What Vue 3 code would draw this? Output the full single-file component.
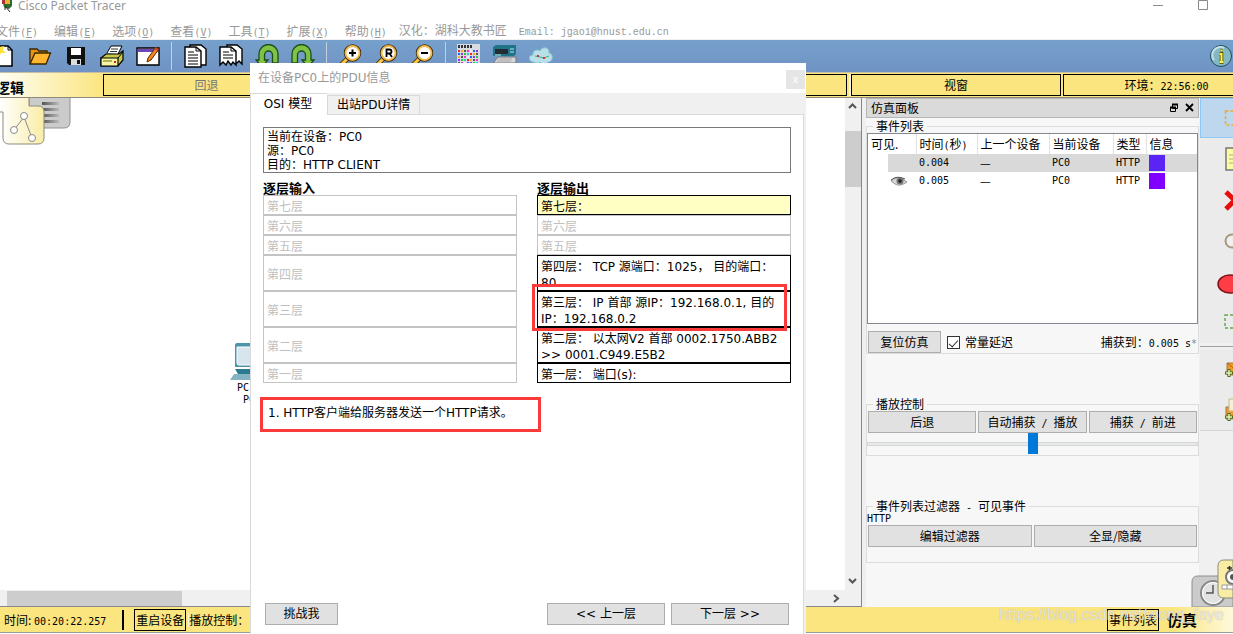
<script setup>
import { ref } from 'vue'

const menus = [
  ['文件', 'F'], ['编辑', 'E'], ['选项', 'O'], ['查看', 'V'],
  ['工具', 'T'], ['扩展', 'X'], ['帮助', 'H'],
]

const swatches = []
const hues = ['#f22', '#2c4', '#26e', '#e3c', '#fa2', '#2cc', '#93e', '#eee', '#555']
for (let r = 0; r < 5; r++) {
  for (let c = 0; c < 7; c++) swatches.push({ x: 1 + c * 3, y: 6 + r * 3, fill: hues[(r * 2 + c * 4) % 9] })
}

const events = [
  { time: '0.004', color: 'blue', seen: false },
  { time: '0.005', color: 'violet', seen: true },
]

const inLayers = ['第七层', '第六层', '第五层', '第四层', '第三层', '第二层', '第一层']
const tall = (i) => i > 2 && i < 6
const outLayers = [
  { lines: ['第七层：'], kind: 'current' },
  { lines: ['第六层'], kind: 'off' },
  { lines: ['第五层'], kind: 'off' },
  { lines: ['第四层： TCP 源端口：1025， 目的端口：', '80'], kind: 'on' },
  { lines: ['第三层： IP 首部 源IP：192.168.0.1, 目的', 'IP：192.168.0.2'], kind: 'on' },
  { lines: ['第二层： 以太网V2 首部 0002.1750.ABB2', '>> 0001.C949.E5B2'], kind: 'on' },
  { lines: ['第一层： 端口(s):'], kind: 'on' },
]

const speed = ref(50)
const constantDelay = ref(true)
</script>

<template>
  <div class="app">
    <header class="titlebar">
      <svg class="logo" width="14" height="12" viewBox="0 0 14 12">
        <path d="M0 0h10v6l-3 3-5-2z" fill="#2c6b2e" /><path d="M3 0h5v4H3z" fill="#e8b23a" />
        <path d="M0 0h3v4H0z" fill="#a33" /><path d="M3 6l5 6M3 7v3" stroke="#222" fill="none" />
      </svg>
      <span class="app-name">Cisco Packet Tracer</span>
      <svg class="win-ctl" width="56" height="12" viewBox="0 0 56 12">
        <path d="M0 5.500h10M45.500.500h9v9h-9z" fill="none" stroke="#8a8a8a" />
      </svg>
    </header>

    <nav class="menubar">
      <button v-for="m in menus" :key="m[1]" type="button">{{ m[0] }}<span class="m">(<u>{{ m[1] }}</u>)</span></button>
      <span class="credit">汉化：湖科大教书匠<span class="m email">Email: jgao1@hnust.edu.cn</span></span>
    </nav>

    <div class="toolbar">
      <button type="button" aria-label="新建">
        <svg width="24" height="24" viewBox="0 0 24 24"><path d="M3 2h13l4 4v16H3z" fill="#fff" stroke="#000" stroke-width="1.500" /><path d="M16 2v4h4" fill="none" stroke="#000" /><path d="M5 0l3 3 4-1-1 4 3 3-5 0-2 4-2-4z" fill="#ffe23c" /></svg>
      </button>
      <button type="button" aria-label="打开">
        <svg width="24" height="24" viewBox="0 0 24 24"><path d="M2 20V5h7l2 2h8v4" fill="#e59416" stroke="#3a2600" stroke-width="1.300" /><path d="M2 20L7 9h15.500L18 20z" fill="#ffb52e" stroke="#3a2600" stroke-width="1.300" /></svg>
      </button>
      <button type="button" aria-label="保存">
        <svg width="24" height="24" viewBox="0 0 24 24"><path d="M3 3h18v18H5l-2-2z" fill="#111" /><path d="M7 4h10v7H7z" fill="#fff" /><path d="M7 15h10v6H7z" fill="#ddd" /><path d="M13 16h3v4h-3z" fill="#111" /></svg>
      </button>
      <button type="button" aria-label="打印">
        <svg width="24" height="24" viewBox="0 0 24 24"><path d="M7 9L11 2h11l-4 8" fill="#fff" stroke="#000" /><path d="M11 5h7M10 7.500h7" stroke="#333" /><path d="M1 14l5-4h13l4-3v9l-5 6H1z" fill="#c6c94b" stroke="#000" stroke-width="1.200" /><path d="M1 14h17v8H1z" fill="#f5f6a2" stroke="#000" stroke-width="1.200" /><path d="M18 14l5-6" stroke="#000" /><path d="M3 17h9" stroke="#9a9a40" stroke-width="1.500" /><path d="M14 18h2" stroke="#c22" stroke-width="2" /></svg>
      </button>
      <button type="button" aria-label="活动向导">
        <svg width="24" height="24" viewBox="0 0 24 24"><path d="M1 4h22v17H1z" fill="#fff" stroke="#000" stroke-width="1.400" /><path d="M2 5h20v3H2z" fill="#6d45b5" /><path d="M12 14L20 3l3 2-8 11-4 2z" fill="#f28422" stroke="#5b2a00" /><path d="M19 4l3 2" stroke="#c33" stroke-width="2" /></svg>
      </button>
      <i class="sep"></i>
      <button type="button" aria-label="复制">
        <svg width="24" height="24" viewBox="0 0 24 24"><path d="M7 1h11l5 4v16H7z" fill="#fff" stroke="#000" stroke-width="1.400" /><path d="M2 3h11l5 4v16H2z" fill="#fff" stroke="#000" stroke-width="1.400" /><path d="M13 3v4h5M5 8h6M5 11h10M5 14h10M5 17h10M5 20h10" fill="none" stroke="#000" /></svg>
      </button>
      <button type="button" aria-label="粘贴">
        <svg width="24" height="24" viewBox="0 0 24 24"><path d="M8 1h10l5 4v15l-3-3-2 2-10-4z" fill="#fff" stroke="#000" stroke-width="1.400" /><path d="M1 3h11l5 4v14l-3-3-2 3-3-4-2 4-3-3-3 3z" fill="#fff" stroke="#000" stroke-width="1.400" /><path d="M12 3v4h5M4 8h6M4 11h10M4 14h10" fill="none" stroke="#000" /></svg>
      </button>
      <button type="button" aria-label="撤销">
        <svg width="24" height="24" viewBox="0 0 24 24"><path d="M23 19V10A9.500 9.500 0 0 0 4 10v6H1l6 7 6-7H9.500v-5a4 4 0 0 1 8 0v8z" fill="#7fc244" stroke="#1d4d1a" stroke-width="1.300" /></svg>
      </button>
      <button type="button" aria-label="重做">
        <svg width="24" height="24" viewBox="0 0 24 24"><path d="M1 19V10A9.500 9.500 0 0 1 20 10v6h3l-6 7-6-7h3.500v-5a4 4 0 0 0-8 0v8z" fill="#7fc244" stroke="#1d4d1a" stroke-width="1.300" /></svg>
      </button>
      <i class="sep"></i>
      <button v-for="z in ['plus', 'reset', 'minus']" :key="z" type="button" :aria-label="z">
        <svg width="24" height="24" viewBox="0 0 24 24">
          <path d="M10 14L2 22" stroke="#5a3c05" stroke-width="5" /><path d="M10 14L2 22" stroke="#ffc64a" stroke-width="3" />
          <circle cx="14.500" cy="9" r="7" fill="#fff" stroke="#3d2b08" stroke-width="3.400" /><circle cx="14.500" cy="9" r="7" fill="#fff" stroke="#f3b94a" stroke-width="1.800" />
          <path v-if="z === 'plus'" d="M11 9h7M14.500 5.500v7" stroke="#000" stroke-width="2" />
          <path v-else-if="z === 'minus'" d="M11 9h7" stroke="#000" stroke-width="2" />
          <path v-else d="M12.500 13V5.500h3a1.800 1.800 0 0 1 0 4h-3m3 0l2.500 3.500" fill="none" stroke="#000" stroke-width="1.800" />
        </svg>
      </button>
      <i class="sep"></i>
      <button type="button" aria-label="调色板">
        <svg width="24" height="24" viewBox="0 0 24 24"><path d="M0 0h23v24H0z" fill="#d8dce0" /><path d="M1 2.500h15" stroke="#333" stroke-width="3" stroke-dasharray="2 1" /><rect v-for="(s, i) in swatches" :key="i" :x="s.x" :y="s.y" width="2" height="2" :fill="s.fill" /></svg>
      </button>
      <button type="button" aria-label="自定义设备">
        <svg width="24" height="24" viewBox="0 0 24 24"><path d="M0 3l3-2h20v9l-2 2H0z" fill="#1f7488" /><path d="M2 5h13v5H2z" fill="#222c33" /><path d="M17 5h4M17 8h4M2 11h6" stroke="#bfe4ec" /><path d="M1 18l4-5h18v6H1z" fill="#d5d5d5" stroke="#777" /><path d="M5 15h14M4 17h14" stroke="#aaa" /></svg>
      </button>
      <button type="button" aria-label="云">
        <svg width="24" height="24" viewBox="0 0 24 24"><path d="M5 18C-1 18-1 11 4 11c-1-5 5-6 7-4 2-5 10-4 9 2 5 1 4 9-1 9-3 3-7 2-8 0-2 2-5 1-6 0z" fill="#b8e0e8" stroke="#8ac2cf" /><path d="M6 12l5 1 4 1 5-2" fill="none" stroke="#4a8" /><path d="M8 12h2M14 14h2" stroke="#c33" stroke-width="2" /></svg>
      </button>
      <button type="button" class="info" aria-label="信息">
        <svg width="24" height="24" viewBox="0 0 24 24"><circle cx="12" cy="12" r="10.500" fill="#82b9c4" stroke="#1f4d5c" /><path d="M5 16a8 8 0 0 1 10-12" fill="none" stroke="#c5e2e6" stroke-width="2" /><path d="M10.500 10h2v8M10.500 18h4M11.500 6.500h2" fill="none" stroke="#4a4a00" stroke-width="3.500" /><path d="M10.500 10h2v8M10.500 18h4M11.500 6.500h2" fill="none" stroke="#fff04a" stroke-width="2" /></svg>
      </button>
    </div>

    <div class="navbar">
      <strong class="logic">逻辑</strong>
      <button type="button" class="back">回退</button>
      <button type="button" class="fill" aria-label="移动对象"></button>
      <button type="button" class="viewport">视窗</button>
      <button type="button" class="env">环境：<span class="m">22:56:00</span></button>
    </div>

    <main class="body">
      <section class="workspace">
        <div class="canvas">
          <svg class="mode-tabs" width="74" height="50" viewBox="0 0 74 50">
            <defs>
              <linearGradient id="cream" x1="0" x2="1"><stop offset="0" stop-color="#fff" /><stop offset="1" stop-color="#f9eda6" /></linearGradient>
              <linearGradient id="slate" x1="0" x2="1"><stop offset="0" stop-color="#555" /><stop offset="1" stop-color="#bbb" /></linearGradient>
            </defs>
            <path d="M29 0h41v25q0 6-6 6H29z" fill="#cbcbcb" stroke="#909090" />
            <path d="M42 5h17v3H42zM42 11h17v3H42zM42 17h17v3H42zM42 23h17v3H42z" fill="url(#slate)" />
            <path d="M0 0h29v9h9q6 0 6 6v26q0 6-6 6H9q-6 0-6-6V15H0z" fill="url(#cream)" />
            <path d="M29 0v9h9q6 0 6 6v26q0 6-6 6H9q-6 0-6-6V15H0" fill="none" stroke="#8d8b7c" />
            <path d="M24 20L14 33M24 20l8 21" stroke="#888" />
            <g fill="#fff" stroke="#888"><circle cx="24" cy="19" r="3.500" /><circle cx="14" cy="33" r="3.500" /><circle cx="32" cy="41" r="3.500" /></g>
          </svg>
          <div class="pc-node">
            <svg width="40" height="38" viewBox="0 0 40 38"><path d="M5 2q0-2 2-2h26v24H5z" fill="#4c95ab" /><path d="M7 4h24v18H9q-2 0-2-2z" fill="#d6e6ec" stroke="#fff" /><path d="M5 26h30v5H8z" fill="#2b7a92" /><path d="M4 31h32l4 6H0z" fill="#84b3c4" /></svg>
            <span class="m">PC-PT</span><span class="m">PC0</span>
          </div>
        </div>
        <div class="vbar">
          <svg width="15" height="16" viewBox="0 0 15 16"><path d="M4 10l3.500-3.500L11 10" fill="none" stroke="#555" stroke-width="2" /></svg>
          <i></i>
          <svg class="end" width="15" height="16" viewBox="0 0 15 16"><path d="M4 5l3.500 3.500L11 5" fill="none" stroke="#555" stroke-width="2" /></svg>
        </div>
        <div class="hbar">
          <i></i>
          <svg width="16" height="15" viewBox="0 0 16 15"><path d="M5 4l4 3.500L5 11" fill="none" stroke="#555" stroke-width="2" /></svg>
        </div>
      </section>

      <aside class="panel">
        <div class="panel-head">
          <span>仿真面板</span>
          <svg width="26" height="10" viewBox="0 0 26 10"><path d="M3.500 1.500h5v4h-5zM1.500 4.500h5v4h-5z" fill="#dadada" stroke="#000" /><path d="M3 1.500h6M1 4.500h6" stroke="#000" stroke-width="2" /><path d="M17 1l7 7M24 1l-7 7" stroke="#000" stroke-width="1.800" /></svg>
        </div>

        <fieldset>
          <legend>事件列表</legend>
          <div class="events">
            <table>
              <colgroup><col class="c1"><col class="c2"><col class="c3"><col class="c4"><col class="c5"><col></colgroup>
              <thead><tr><th>可见.</th><th>时间<span class="m">(</span>秒<span class="m">)</span></th><th>上一个设备</th><th>当前设备</th><th>类型</th><th>信息</th></tr></thead>
              <tbody>
                <tr v-for="e in events" :key="e.time" :class="{ picked: !e.seen }">
                  <td class="eye"><svg v-if="e.seen" width="18" height="12" viewBox="0 0 18 12"><path d="M1 6Q7-1 17 7q-7 5-12 2z" fill="#d5d5d5" stroke="#999" /><circle cx="10" cy="6" r="3.500" fill="#777" /><circle cx="10" cy="6" r="1.800" fill="#222" /><path d="M1 5Q7 0 15 4" fill="none" stroke="#555" /></svg></td>
                  <td class="m">{{ e.time }}</td><td>—</td><td class="m">PC0</td><td class="m">HTTP</td>
                  <td class="chip"><i :class="e.color"></i></td>
                </tr>
              </tbody>
            </table>
          </div>
          <div class="reset-row">
            <button type="button" class="btn reset">复位仿真</button>
            <label><input v-model="constantDelay" type="checkbox">常量延迟</label>
            <span class="captured">捕获到：<span class="m">0.005 s<em>*</em></span></span>
          </div>
        </fieldset>

        <fieldset>
          <legend>播放控制</legend>
          <div class="btn-row">
            <button type="button" class="btn">后退</button>
            <button type="button" class="btn">自动捕获<span class="m"> / </span>播放</button>
            <button type="button" class="btn">捕获<span class="m"> / </span>前进</button>
          </div>
          <input v-model="speed" class="slider" type="range" min="0" max="100" aria-label="播放速度">
        </fieldset>

        <fieldset class="filters">
          <legend>事件列表过滤器<span class="m"> - </span>可见事件</legend>
          <div class="m proto">HTTP</div>
          <div class="btn-row">
            <button type="button" class="btn">编辑过滤器</button>
            <button type="button" class="btn">全显/隐藏</button>
          </div>
        </fieldset>
      </aside>

      <div class="tools">
        <button type="button" class="active" aria-label="选择"><svg width="24" height="24" viewBox="0 0 24 24"><path d="M1.500 5h20v14h-20z" fill="none" stroke="#f5a623" stroke-width="1.500" stroke-dasharray="3 2" /></svg></button>
        <button type="button" aria-label="注释"><svg width="24" height="24" viewBox="0 0 24 24"><path d="M2 1h20v22H2z" fill="#fbfba0" stroke="#777" stroke-width="1.500" /><path d="M5 8h14M5 12h14M5 16h14" stroke="#aaa" /></svg></button>
        <button type="button" aria-label="删除"><svg width="24" height="24" viewBox="0 0 24 24"><path d="M2 4l18 17M20 3L2 21" stroke="#e80d0d" stroke-width="5" /></svg></button>
        <button type="button" aria-label="查看"><svg width="24" height="24" viewBox="0 0 24 24"><circle cx="8" cy="12" r="6.500" fill="#f0f0f0" stroke="#a89880" stroke-width="2" /></svg></button>
        <button type="button" class="wide" aria-label="绘图"><svg width="32" height="24" viewBox="0 0 32 24"><ellipse cx="13" cy="14" rx="12" ry="9" fill="#ff3d46" stroke="#801018" stroke-width="1.500" /></svg></button>
        <button type="button" aria-label="调整大小"><svg width="24" height="24" viewBox="0 0 24 24"><path d="M1 4h20v13H1z" fill="none" stroke="#6aa84f" stroke-width="1.500" stroke-dasharray="3 2" /></svg></button>
        <hr>
        <button type="button" aria-label="简单PDU"><svg width="24" height="24" viewBox="0 0 24 24"><path d="M3 5h19v12H3z" fill="#f09a2a" stroke="#a0784a" /><path d="M3 5l9 7 9-7" fill="none" stroke="#b3651a" /><path d="M1 15h8M5 11v8" stroke="#446b22" stroke-width="3" /><path d="M2 15h6M5 12v6" stroke="#e5f5b0" stroke-width="1.500" /></svg></button>
        <button type="button" aria-label="复杂PDU"><svg width="24" height="24" viewBox="0 0 24 24"><path d="M2 9h20v12H2z" fill="#f09a2a" stroke="#a0784a" /><path d="M5 1h17v12H5z" fill="#f5f0d8" stroke="#c6b98c" /><path d="M9 5h9" stroke="#999" /><path d="M1 19h8M5 15v8" stroke="#446b22" stroke-width="3" /><path d="M2 19h6M5 16v6" stroke="#e5f5b0" stroke-width="1.500" /></svg></button>
      </div>

      <svg class="time-tabs" width="42" height="48" viewBox="0 0 42 48">
        <path d="M1 48V23q0-6 6-6h35v31z" fill="#cbcbcb" stroke="#8e8e8e" />
        <circle cx="22" cy="34" r="12" fill="#e2e2e2" stroke="#888" stroke-width="2" /><circle cx="22" cy="34" r="10.500" fill="none" stroke="#fff" /><path d="M22 26v8h-7" fill="none" stroke="#555" stroke-width="1.500" />
        <path d="M42 1h-9q-6 0-6 6v26q0 6 6 6h9z" fill="#f9eda6" stroke="#8d8b7c" />
        <circle cx="42" cy="18" r="7" fill="#fff" stroke="#777" stroke-width="2" /><circle cx="42" cy="18" r="3" fill="#555" /><path d="M36 9h5M38.500 7v4" stroke="#333" stroke-width="1.500" /><path d="M31 26h11v4H31zM36 26v4" fill="#fff" stroke="#999" />
      </svg>
    </main>

    <footer class="status">
      <span>时间: <span class="m">00:20:22.257</span></span>
      <i class="bar"></i>
      <button type="button" class="box">重启设备</button>
      <span class="play">播放控制：</span>
      <button type="button" class="box list">事件列表</button>
      <strong>仿真</strong>
      <span class="watermark">https://blog.csdn.net/wong_faye</span>
    </footer>

    <section class="dialog" role="dialog" aria-label="PDU信息">
      <div class="dlg-title">
        <span>在设备PC0上的PDU信息</span>
        <button type="button">x</button>
      </div>
      <div class="tabs">
        <button type="button" class="tab on">OSI 模型</button>
        <button type="button" class="tab">出站PDU详情</button>
      </div>
      <div class="page">
        <div class="summary">当前在设备：PC0<br>源：PC0<br>目的：HTTP CLIENT</div>
        <div class="cols">
          <div class="col">
            <h2>逐层输入</h2>
            <div v-for="(t, i) in inLayers" :key="t" class="layer off" :class="{ tall: tall(i) }">{{ t }}</div>
          </div>
          <div class="col">
            <h2>逐层输出</h2>
            <div v-for="(l, i) in outLayers" :key="i" class="layer" :class="[l.kind, { tall: tall(i) }]">
              <div v-for="s in l.lines" :key="s">{{ s }}</div>
            </div>
            <div class="mark"></div>
          </div>
        </div>
        <p class="desc">1. HTTP客户端给服务器发送一个HTTP请求。</p>
        <div class="actions">
          <button type="button" class="btn">挑战我</button>
          <span></span>
          <button type="button" class="btn step">&lt;&lt; 上一层</button>
          <button type="button" class="btn step">下一层 &gt;&gt;</button>
        </div>
      </div>
    </section>
  </div>
</template>

<style>
html, body { margin: 0; background: #fff; }
</style>

<style scoped>
* { box-sizing: border-box; }
.app {
  position: relative; display: flex; flex-direction: column; min-height: 100vh; overflow: hidden;
  background: #fff; color: #000; font: 12px/14px "Noto Sans CJK SC", sans-serif;
}
button { font: inherit; color: inherit; padding: 0; margin: 0; border: 0; background: none; white-space: nowrap; }
svg { display: block; flex: none; }
.m { font-family: "DejaVu Sans Mono", "Noto Sans CJK SC", monospace; font-size: 10px; white-space: pre; }
span.m { line-height: 10px; }

.titlebar { display: flex; height: 22px; padding: 0 24px 0 2px; color: #999; }
.app-name { margin-left: 2px; font: 12px/12px "Noto Sans", sans-serif; }
.win-ctl { margin-left: auto; }
.menubar { display: flex; gap: 16px; height: 18px; margin-left: -4px; line-height: 16px; color: #999; border-bottom: 1px solid #f0f0f0; white-space: nowrap; }
.credit { margin-left: -4px; }
.email { margin-left: 12px; font-family: "Liberation Mono", monospace; }

.toolbar { display: flex; align-items: center; height: 32px; background: linear-gradient(#76a0cc, #7093c3); }
.toolbar button { flex: none; width: 36px; display: flex; justify-content: center; }
.toolbar button:first-child { margin-left: -14px; }
.sep { flex: none; width: 1px; height: 28px; margin: 0 5px; background: #c5d0de; }
.toolbar .info { margin-left: auto; width: 24px; }

.navbar { display: flex; height: 26px; padding: 1px 0; background: #fae57f; border-top: 1px solid #c4bfa5; border-bottom: 1px solid #8c8a80; }
.navbar button { border: 1px solid #000; height: 22px; line-height: 20px; }
.logic { flex: none; width: 103px; margin: -1px 0; padding: 5px 0 0; text-indent: -4px; font-size: 14px; line-height: 18px; background: linear-gradient(90deg, #fffef3, #fae57f); }
.back { flex: none; width: 207px; }
.navbar .back { color: #777; }
.fill { flex: 1; margin-right: 2px; }
.viewport { flex: none; width: 210px; box-shadow: -2px 0 #f2f2f2; }
.navbar .viewport { margin: 0 2px; }
.env { flex: none; width: 170px; }
.navbar .env { padding-left: 36px; border-right: 0; }

.body { position: relative; flex: 1; display: flex; background: #f0f0f0; }
.workspace { flex: 1; min-width: 0; display: grid; grid-template: 1fr 16px / 1fr 16px; border-right: 1px solid #828790; border-bottom: 1px solid #828790; background: #f0f0f0; }
.canvas { position: relative; background: #fff; overflow: hidden; }
.mode-tabs { position: absolute; left: 0; top: -1px; }
.pc-node { position: absolute; left: 230px; top: 245px; width: 44px; display: flex; flex-direction: column; align-items: center; }
.pc-node .m { line-height: 12px; }
.pc-node svg { align-self: flex-start; margin-bottom: 1px; }
.vbar { display: flex; flex-direction: column; }
.vbar i { height: 56px; margin: 17px 0 0; background: #cdcdcd; }
.vbar .end { margin-top: auto; }
.hbar { display: flex; align-items: center; justify-content: space-between; padding-left: 7px; }
.hbar i { width: 175px; height: 15px; background: #cdcdcd; }

.panel { flex: none; width: 333px; margin-left: 4px; background: #f7f7f7; }
.panel-head { display: flex; align-items: center; justify-content: space-between; height: 20px; padding: 0 3px 0 4px; border: 1px solid #b5b5b5; background: #dadada; }
fieldset { min-width: 0; margin: 1px 0 43px; padding: 0; border: 1px solid #dcdcdc; }
legend { margin-left: 6px; padding: 0 3px; line-height: 14px; }
.events { height: 191px; border: 1px solid #828790; background: #fff; }
table { width: 100%; border-collapse: collapse; table-layout: fixed; }
th, td { padding: 0 0 0 3px; text-align: left; font-weight: normal; white-space: nowrap; }
th { height: 20px; border-right: 1px solid #e2e2e2; line-height: 18px; }
th:last-child { border: 0; }
td { height: 18px; line-height: 16px; }
.c1 { width: 48px; } .c2 { width: 61px; } .c3 { width: 72px; } .c4 { width: 64px; } .c5 { width: 33px; }
.picked { background: linear-gradient(90deg, #fff 20px, #d9d9d9 20px); }
.eye { padding-left: 22px; }
.chip i { display: block; width: 16px; height: 16px; }
.blue { background: #5924f4; }
.violet { background: #8000ff; }
.btn { height: 22px; border: 1px solid #adadad; background: #e1e1e1; line-height: 20px; }
.reset-row { display: flex; align-items: center; margin-top: 7px; padding: 0 1px; }
.reset { width: 73px; margin-right: 6px; }
label { display: flex; align-items: center; gap: 5px; }
input[type="checkbox"] { appearance: none; width: 13px; height: 13px; margin: 0; border: 1px solid #333; background: #fff; display: grid; place-items: center; }
input[type="checkbox"]:checked::after { content: ""; width: 4px; height: 8px; border: solid #333; border-width: 0 1px 1px 0; transform: rotate(42deg); }
.captured { margin-left: auto; white-space: pre; }
em { font-style: normal; color: #888; }
.btn-row { display: flex; gap: 2px; padding: 0 1px; }
.btn-row .btn { flex: 1 1 0; }
.slider { appearance: none; display: block; width: 100%; height: 22px; margin: 0; background: none; }
.slider::-webkit-slider-runnable-track { height: 4px; border: 1px solid #d6d6d6; background: #e7eaea; }
.slider::-webkit-slider-thumb { appearance: none; width: 10px; height: 21px; margin-top: -10px; background: #0078d7; }
.proto { line-height: 12px; }
.panel .filters { margin-bottom: 0; padding-bottom: 15px; }

.tools { flex: none; width: 34px; padding-left: 1px; overflow: hidden; background: #f0f0f0; }
.tools button { display: flex; align-items: center; width: 64px; height: 41px; padding-left: 24px; background: #ebebeb; }
.tools button.active { height: 40px; padding-left: 23px; background: #bcd7ee; border: 1px solid #8fc8f7; }
.tools button.wide { padding-left: 17px; }
.tools hr { margin: 3px 0 2px; border: 0; border-top: 1px solid #a0a0a0; }
.tools button:last-child { border-bottom: 1px solid #d5d5d5; }
.time-tabs { position: absolute; right: 0; bottom: 0; }

.status { position: relative; display: flex; align-items: center; height: 26px; margin-bottom: 1px; padding: 0 36px 0 4px; background: linear-gradient(90deg, #fae57f calc(100% - 60px), #fff9dc); border-bottom: 1px solid #9b9b9b; white-space: nowrap; }
.bar { width: 2px; height: 20px; margin: 0 10px 0 16px; background: #000; }
.box { width: 52px; height: 22px; border: 1px solid #000; line-height: 20px; }
.play { margin-left: 2px; border-left: 1px solid #fff8d8; }
.list { margin-left: auto; }
.status strong { margin-left: 8px; font-size: 15px; line-height: 24px; }
.watermark { position: absolute; right: 9px; top: -2px; font: 16px/20px "Liberation Sans", sans-serif; color: rgba(255, 255, 255, .7); text-shadow: 0 0 1px rgba(120, 120, 120, .6); }

.dialog { position: absolute; left: 250px; top: 63px; bottom: 0; width: 556px; display: flex; flex-direction: column; background: #f0f0f0; font-family: "DejaVu Sans", "Noto Sans CJK SC", sans-serif; }
.dlg-title { display: flex; align-items: center; justify-content: space-between; height: 30px; padding: 0 1px 0 8px; background: #fff; color: #999; }
.dlg-title button { width: 19px; height: 19px; margin-top: 3px; background: #e5e5e5; color: #fff; font-size: 10px; line-height: 16px; }
.tabs { display: flex; align-items: flex-end; height: 22px; }
.tab { position: relative; height: 20px; padding: 0 9px; border: 1px solid #d9d9d9; line-height: 18px; }
.tab.on { z-index: 1; height: 22px; width: 77px; padding: 0 2px 0 0; background: #fff; border-bottom-color: #fff; border-right: 0; }
.page { flex: 1; display: flex; flex-direction: column; margin: -1px 2px 0 0; padding: 12px 12px 9px 12px; border: 1px solid #d9d9d9; border-bottom: 0; background: #fff; }
.summary { height: 46px; padding: 2px 3px; border: 1px solid #7a7a7a; }
.cols { display: grid; grid-template-columns: 1fr 1fr; gap: 20px; margin-top: 9px; }
.col { position: relative; }
h2 { margin: 0; height: 13px; font-size: 13px; line-height: 14px; }
.layer { height: 20px; padding: 3px 0 0 3px; overflow: hidden; border: 1px solid #000; line-height: 16px; white-space: pre; }
.layer.tall { height: 36px; }
.layer.off { color: #bfbfbf; border-color: #c4c4c4; }
.layer.off.tall { padding-top: 11px; }
.layer.current { background: #ffffc4; }
.mark { position: absolute; left: -5px; right: 4px; top: 102px; height: 47px; border: 3px solid #fb3a3a; }
.desc { align-self: flex-start; width: 281px; height: 35px; margin: 14px 0 0 -3px; padding: 0 0 0 5px; border: 3px solid #fb3a3a; line-height: 27px; white-space: nowrap; }
.actions { display: flex; gap: 6px; margin-top: auto; padding: 0 2px; }
.actions span { flex: 1; }
.actions .btn { width: 73px; }
.actions .step { width: 118px; }
</style>
